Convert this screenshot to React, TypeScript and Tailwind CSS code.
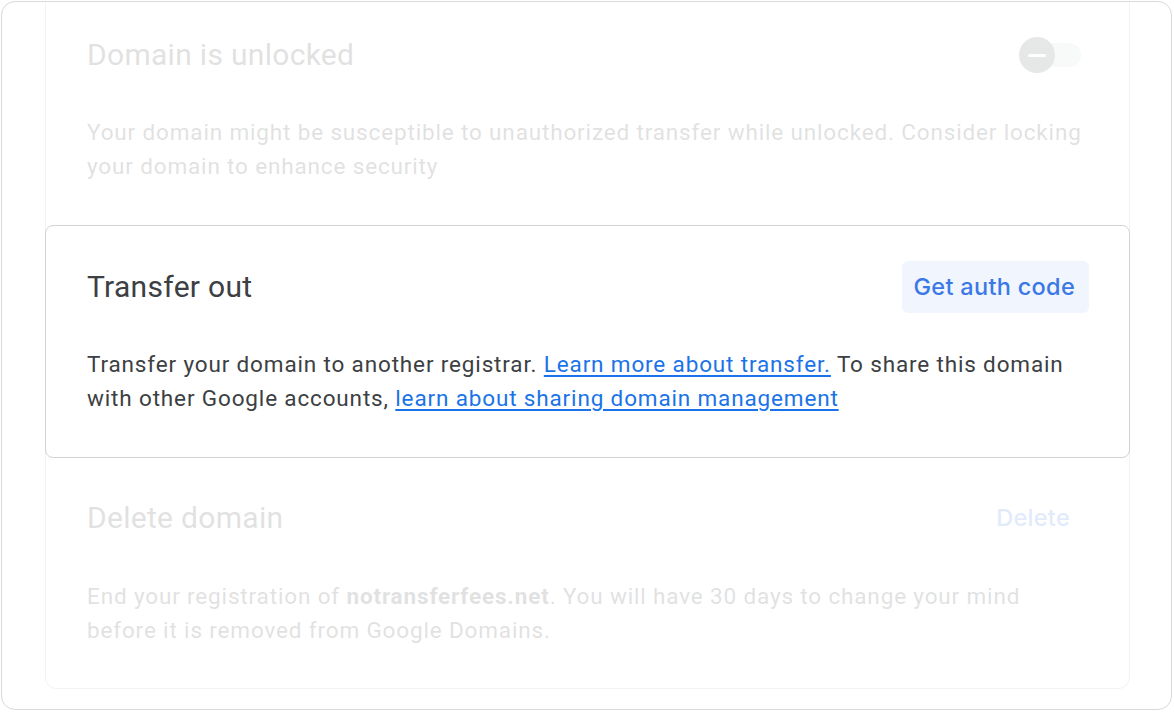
import React from "react";

export default function App() {
  const body = "text-[22.5px] leading-[34px] tracking-[0.85px] text-[#3c4043]";
  const title = "text-[30px] leading-[36px] tracking-[0.3px] text-[#3c4043]";
  const btnFont = { fontFamily: "Inter, 'Open Sans', Roboto, sans-serif" };
  return (
    <div className="w-[1174px] h-[713px] bg-white pt-[1px] pl-[1px] pr-[2px] pb-[3px]" style={{ fontFamily: "Roboto, 'Liberation Sans', sans-serif" }}>
      <div className="h-full rounded-[14px] border border-[#d9d9d9] overflow-hidden pl-[43px] pr-[41px]">
        <div className="relative rounded-b-[12px] border border-t-0 border-[#f3f3f3] h-[687px]">
          {/* Section 1 (faded) */}
          <div className="opacity-[0.15] pl-[41px] pr-[36px] pt-[27px] pb-[42px]">
            <div className="flex items-center justify-between h-[52px] pr-[12px]">
              <div className={title}>Domain is unlocked</div>
              <div className="relative w-[52px] h-[24px] mr-0">
                <div className="absolute left-[0px] top-[0px] w-[52px] h-[24px] rounded-full bg-[#9aa0a6] opacity-40"></div>
                <div className="absolute -left-[10px] -top-[6px] w-[36px] h-[36px] rounded-full bg-[#5f6368] flex items-center justify-center">
                  <div className="w-[18px] h-[3px] rounded-full bg-white"></div>
                </div>
              </div>
            </div>
            <p className={`mt-[34px] ${body}`}>
              Your domain might be susceptible to unauthorized transfer while unlocked. Consider locking your domain to enhance security
            </p>
          </div>

          {/* Transfer out card */}
          <div className="-ml-[1px] -mr-[1px] rounded-[8px] border border-[#d2d2d2] bg-white pl-[41px] pr-[40px] pt-[35px] pb-[42px]">
            <div className="flex items-center justify-between h-[52px]">
              <div className={title}>Transfer out</div>
              <button style={btnFont} className="h-[52px] pl-[11px] pr-[14px] rounded-[6px] bg-[#f1f5fd] text-[#3b78e7] text-[23.5px] font-medium tracking-[0.3px]">
                Get auth code
              </button>
            </div>
            <p className={`mt-[34px] ${body}`}>
              Transfer your domain to another registrar.{" "}
              <a className="text-[#1a73e8] underline underline-offset-[3px]">Learn more about transfer.</a> To share this domain
              with other Google accounts,{" "}
              <a className="text-[#1a73e8] underline underline-offset-[3px]">learn about sharing domain management</a>
            </p>
          </div>

          {/* Delete section (faded) */}
          <div className="pl-[41px] pr-[40px] pt-[34px]">
            <div className="flex items-center justify-between h-[52px]">
              <div className={`${title} opacity-[0.15]`}>Delete domain</div>
              <button style={btnFont} className="h-[52px] px-[19px] text-[23.5px] font-medium tracking-[0.3px] text-[#3b78e7] opacity-[0.15]">Delete</button>
            </div>
            <p className={`mt-[35px] ${body} opacity-[0.15]`}>
              End your registration of <b className="font-bold">notransferfees.net</b>. You will have 30 days to change your mind before it is removed from Google Domains.
            </p>
          </div>
        </div>
      </div>
    </div>
  );
}
